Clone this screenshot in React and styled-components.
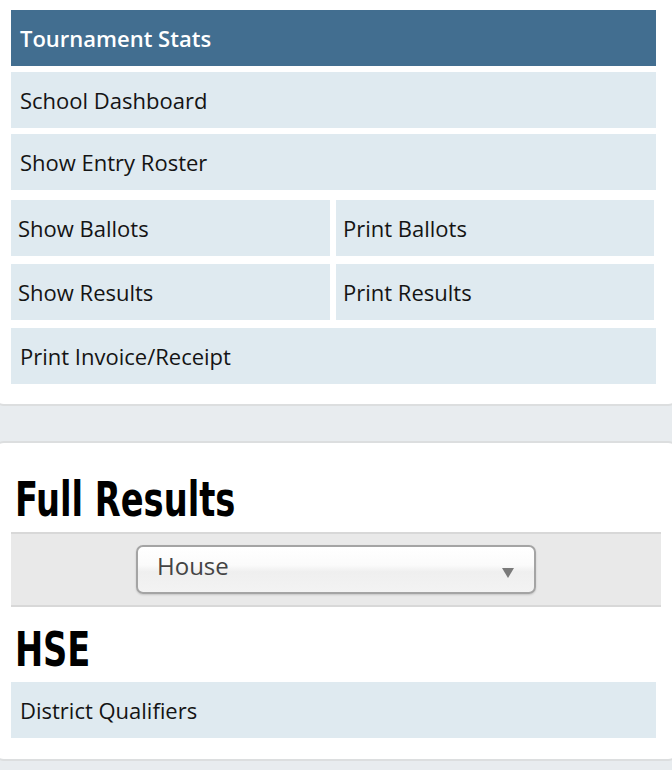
import React from "react"
import styled, { createGlobalStyle } from "styled-components"

const GlobalStyle = createGlobalStyle`
  html, body {
    margin: 0;
    padding: 0;
    background: #e8ecef;
    font-family: "Open Sans", "Liberation Sans", sans-serif;
  }
`

const Page = styled.div`
  width: 672px;
  overflow: hidden;
`

const Card = styled.div`
  background: #fff;
  margin: 0 -6px;
  padding: ${(p) => p.$pad};
  border-radius: 0 0 10px 10px;
  border-bottom: 2px solid #dcdedf;
  ${(p) =>
    p.$top &&
    `
    margin-top: 35px;
    border-top: 2px solid #dcdedf;
    border-radius: 10px;
  `}
`

const Menu = styled.div`
  display: grid;
  grid-template-columns: 319px 318px;
  column-gap: 6px;
  row-gap: 6px;
  justify-items: start;
`

const Header = styled.div`
  grid-column: 1 / -1;
  width: 645px;
  height: 56px;
  box-sizing: border-box;
  display: flex;
  align-items: center;
  padding-left: 9px;
  background: #426e90;
  color: #fff;
  font-size: 22px;
  font-weight: 600;
`

const Item = styled.div`
  grid-column: ${(p) => (p.$wide ? "1 / -1" : "auto")};
  width: ${(p) => (p.$wide ? "645px" : "100%")};
  height: 56px;
  box-sizing: border-box;
  display: flex;
  align-items: center;
  padding-left: ${(p) => (p.$wide ? "9px" : "7px")};
  margin-top: ${(p) => p.$mt || "0"};
  background: #dfeaf0;
  color: #141414;
  font-size: 22px;
`

const Title = styled.h2`
  margin: ${(p) => p.$mt || "0"} 0 0;
  padding-left: 5px;
  font-family: "DejaVu Sans", "Liberation Sans", sans-serif;
  font-stretch: condensed;
  font-weight: 700;
  font-size: 48px;
  line-height: 1;
  color: #000;
  transform: scaleX(0.78);
  transform-origin: left center;
`

const FilterBar = styled.div`
  width: 650px;
  height: 75px;
  margin-top: 9px;
  display: flex;
  align-items: center;
  justify-content: center;
  background: #e9e9e9;
  border-top: 2px solid #d8d8d8;
  border-bottom: 2px solid #d8d8d8;
  box-sizing: border-box;
`

const Select = styled.div`
  width: 400px;
  height: 49px;
  box-sizing: border-box;
  display: flex;
  align-items: center;
  justify-content: space-between;
  padding: 0 20px 0 19px;
  border: 2px solid #a4a4a4;
  border-radius: 7px;
  background: linear-gradient(#ffffff 0%, #fbfbfb 40%, #efefef 55%, #f3f3f3 100%);
  box-shadow: 0 1px 2px rgba(0, 0, 0, 0.15);
  color: #444;
  font-size: 24px;
  font-family: "Open Sans", "Liberation Sans", sans-serif;
`

const SelectLabel = styled.span`
  margin-top: -8px;
`

const Arrow = styled.span`
  width: 0;
  height: 0;
  margin-top: 6px;
  border-left: 6px solid transparent;
  border-right: 6px solid transparent;
  border-top: 10px solid #7a7a7a;
`

const Row = styled.div`
  width: 645px;
  height: 56px;
  display: flex;
  align-items: center;
  padding-left: 9px;
  box-sizing: border-box;
  background: #dfeaf0;
  color: #141414;
  font-size: 22px;
  margin-top: 9px;
`

export default function App() {
  return (
    <Page>
      <GlobalStyle />
      <Card $pad="10px 22px 20px 17px">
        <Menu>
          <Header>Tournament Stats</Header>
          <Item $wide>School Dashboard</Item>
          <Item $wide>Show Entry Roster</Item>
          <Item $mt="4px">Show Ballots</Item>
          <Item $mt="4px">Print Ballots</Item>
          <Item $mt="2px">Show Results</Item>
          <Item $mt="2px">Print Results</Item>
          <Item $wide $mt="2px">Print Invoice/Receipt</Item>
        </Menu>
      </Card>
      <Card $top $pad="32px 11px 21px 17px">
        <Title>Full Results</Title>
        <FilterBar>
          <Select>
            <SelectLabel>House</SelectLabel>
            <Arrow />
          </Select>
        </FilterBar>
        <Title $mt="18px">HSE</Title>
        <Row>District Qualifiers</Row>
      </Card>
    </Page>
  )
}
